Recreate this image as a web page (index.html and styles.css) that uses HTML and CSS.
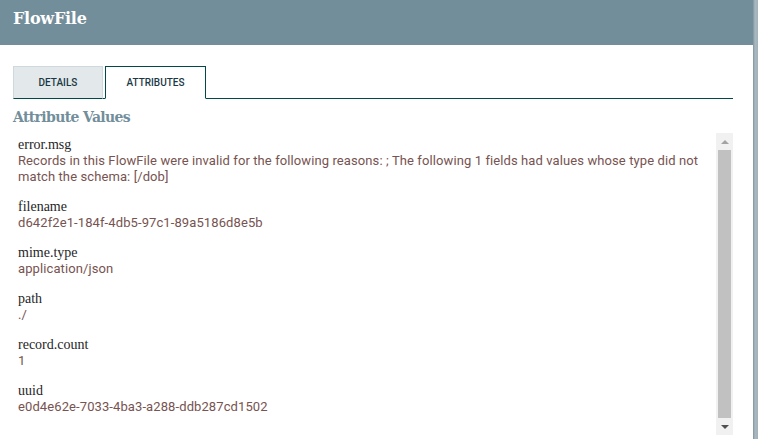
FILE: index.html
```html
<!DOCTYPE html>
<html lang="en">
<head>
    <meta charset="UTF-8">
    <title>FlowFile</title>
    <link rel="stylesheet" href="styles.css">
</head>
<body>
    <div class="dialog">
        <div class="dialog-header">FlowFile</div>
        <div class="dialog-content">
            <div class="tabs">
                <div class="tab">Details</div>
                <div class="tab active">Attributes</div>
            </div>
            <div class="section-title">Attribute Values</div>
            <div class="attr-box">
                <div class="attr-list">
                    <div class="attr">
                        <div class="attr-name">error.msg</div>
                        <div class="attr-value">Records in this FlowFile were invalid for the following reasons: ; The following 1 fields had values whose type did not match the schema: [/dob]</div>
                    </div>
                    <div class="attr">
                        <div class="attr-name">filename</div>
                        <div class="attr-value">d642f2e1-184f-4db5-97c1-89a5186d8e5b</div>
                    </div>
                    <div class="attr">
                        <div class="attr-name">mime.type</div>
                        <div class="attr-value">application/json</div>
                    </div>
                    <div class="attr">
                        <div class="attr-name">path</div>
                        <div class="attr-value">./</div>
                    </div>
                    <div class="attr">
                        <div class="attr-name">record.count</div>
                        <div class="attr-value">1</div>
                    </div>
                    <div class="attr">
                        <div class="attr-name">uuid</div>
                        <div class="attr-value">e0d4e62e-7033-4ba3-a288-ddb287cd1502</div>
                    </div>
                </div>
                <!-- полоса прокрутки списка -->
                <div class="scrollbar">
                    <div class="scroll-btn"><span class="arrow-up"></span></div>
                    <div class="scroll-thumb"></div>
                    <div class="scroll-btn"><span class="arrow-down"></span></div>
                </div>
            </div>
        </div>
    </div>
    <div class="page-scroll"></div>
</body>
</html>
```

FILE: styles.css
```css
/* Диалог FlowFile */
body {
    margin: 0;
    padding: 0;
    display: flex;
    height: 439px;
    overflow: hidden;
    background-color: #fff;
    font-family: Roboto, "Liberation Sans", sans-serif;
}
.dialog {
    flex: 1;
    display: flex;
    flex-direction: column;
}
.dialog-header {
    height: 45px;
    box-sizing: border-box;
    padding: 8px 13px 0;
    background-color: #728e9b;
    color: #fff;
    font-family: "DejaVu Serif", serif;
    font-weight: bold;
    font-size: 16px;
    line-height: 22px;
    letter-spacing: -0.25px;
}
.dialog-content {
    flex: 1;
    display: flex;
    flex-direction: column;
    padding: 21px 20px 4px 13px;
}
.tabs {
    display: flex;
    border-bottom: 1px solid #004849;
}
.tab {
    width: 88px;
    height: 31px;
    line-height: 31px;
    margin-right: 2px;
    margin-bottom: -1px;
    border: 1px solid #cfd8dc;
    border-bottom: 1px solid #004849;
    background-color: #e3e8eb;
    color: #1b3944;
    font-size: 10px;
    font-weight: 500;
    text-transform: uppercase;
    text-align: center;
}
.tab.active {
    width: 99px;
    background-color: #fff;
    border-color: #004849;
    border-bottom-color: #fff;
}
.section-title {
    margin: 8px 0 6px;
    color: #728e9b;
    font-family: "DejaVu Serif", serif;
    font-weight: bold;
    font-size: 14px;
    line-height: 20px;
    letter-spacing: -0.65px;
}
.attr-box {
    flex: 1;
    display: flex;
    min-height: 0;
}
.attr-list {
    flex: 1;
    padding: 4px 14px 0 5px;
}
.attr {
    margin-bottom: 14px;
}
.attr-name {
    font-family: "Liberation Serif", serif;
    font-size: 14px;
    line-height: 16px;
    color: #262626;
}
.attr-value {
    font-size: 13px;
    line-height: 16px;
    letter-spacing: 0.1px;
    color: #775351;
}
/* Полоса прокрутки */
.scrollbar {
    width: 17px;
    display: flex;
    flex-direction: column;
    background-color: #f1f1f1;
}
.scroll-btn {
    height: 17px;
    display: flex;
    align-items: center;
    justify-content: center;
}
.scroll-thumb {
    flex: 1;
    margin: 0 2px;
    background-color: #c1c1c1;
}
.arrow-up {
    width: 0;
    height: 0;
    border-left: 4px solid transparent;
    border-right: 4px solid transparent;
    border-bottom: 4px solid #a3a3a3;
}
.arrow-down {
    width: 0;
    height: 0;
    border-left: 4px solid transparent;
    border-right: 4px solid transparent;
    border-top: 4px solid #505050;
}
.page-scroll {
    width: 5px;
    background: linear-gradient(to right, #7f939d, #aab8bf 40%, #a2b1b8);
}
```
